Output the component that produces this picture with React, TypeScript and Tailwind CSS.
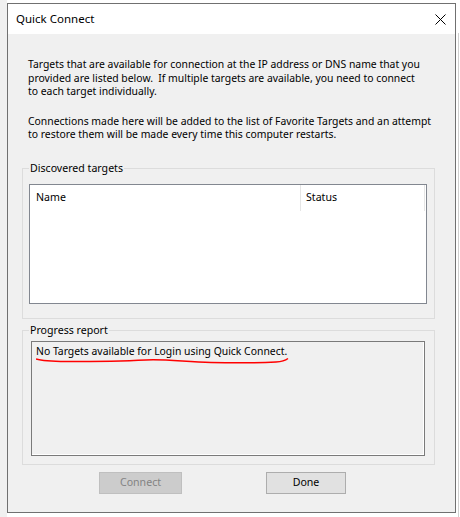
import React from 'react'

const font = { fontFamily: '"Noto Sans", "Liberation Sans", sans-serif' }

function GroupBox({ label, className, children }: { label: string; className: string; children: React.ReactNode }) {
  return (
    <div className={`relative border border-[#dcdcdc] ${className}`}>
      {/* caption sits over the top border */}
      <span className="absolute left-[6px] top-[-8px] bg-[#f0f0f0] px-[1px] text-[10.6px] leading-[15px] text-black">
        {label}
      </span>
      {children}
    </div>
  )
}

export default function App() {
  return (
    <div className="w-[460px] h-[517px] bg-white overflow-hidden flex" style={font}>
      {/* desktop behind the dialog */}
      <div className="w-[7px] h-full bg-[#f0f0f0]" />
      <div className="flex flex-col pt-[3px]">
        <div className="w-[449px] h-[510px] border border-[#707070] flex flex-col">
          {/* Title bar */}
          <div className="h-[30px] bg-white flex items-center justify-between pl-[8px] pr-[9px]">
            <span className="text-[11.5px] text-black leading-none">Quick Connect</span>
            <svg width="11" height="11" viewBox="0 0 11 11" className="mt-[1px]">
              <path d="M0.5 0.5 L10.5 10.5 M10.5 0.5 L0.5 10.5" stroke="#000" strokeWidth="1" fill="none" />
            </svg>
          </div>

          {/* Body */}
          <div className="flex-1 bg-[#f0f0f0] flex flex-col pl-[14px]">
            <div className="pl-[6px] pt-[24px] text-[10.4px] leading-[13.5px] text-black whitespace-pre">
              <p>
                Targets that are available for connection at the IP address or DNS name that you
                <br />
                provided are listed below.  If multiple targets are available, you need to connect
                <br />
                to each target individually.
              </p>
              <p className="mt-[16px]">
                Connections made here will be added to the list of Favorite Targets and an attempt
                <br />
                to restore them will be made every time this computer restarts.
              </p>
            </div>

            <GroupBox label="Discovered targets" className="mt-[26px] w-[413px] h-[151px] pt-[15px] pl-[6px]">
              <div className="w-[398px] h-[120px] border border-[#828790] bg-white">
                <div className="flex h-[26px] text-[10.6px] text-black">
                  <div className="w-[271px] pl-[6px] pt-[1px] flex items-center border-r border-[#e5e5e5]">Name</div>
                  <div className="w-[124px] pl-[5px] pt-[1px] flex items-center border-r border-[#e5e5e5]">Status</div>
                </div>
              </div>
            </GroupBox>

            <GroupBox label="Progress report" className="mt-[11px] w-[413px] h-[135px] pt-[10px] pl-[8px]">
              <div className="relative w-[394px] h-[115px] border border-[#7a7a7a] shadow-[inset_0_-1px_0_#ffffff,inset_-1px_0_0_#ffffff] bg-[#f0f0f0] pl-[4px] pt-[2px]">
                <span className="block text-[10.4px] leading-[14px] text-black">No Targets available for Login using Quick Connect.</span>
                {/* spell-check squiggle */}
                <svg className="absolute left-[4px] top-[15px]" width="254" height="8" viewBox="0 0 254 8">
                  <path
                    d="M0 2 C6 4 14 4.5 30 4.5 C60 4.5 90 4 110 3 C130 2 150 5 175 5.5 C200 6 220 6 240 5 C246 4.6 250 3 252 1.5"
                    stroke="#ff0000"
                    strokeWidth="1.5"
                    fill="none"
                  />
                </svg>
              </div>
            </GroupBox>

            <div className="flex mt-[7px]">
              <button className="ml-[77px] w-[83px] h-[22px] border border-[#bfbfbf] bg-[#cccccc] text-[10.6px] text-[#838383] leading-none">
                Connect
              </button>
              <button className="ml-[84px] w-[80px] h-[22px] border border-[#adadad] bg-[#e1e1e1] text-[10.6px] text-black leading-none">
                Done
              </button>
            </div>
          </div>
        </div>
      </div>
      <div className="flex-1 pt-[33px] pl-[2px]">
        <div className="w-[1px] h-full bg-[#d0d0d0]" />
      </div>
    </div>
  )
}
